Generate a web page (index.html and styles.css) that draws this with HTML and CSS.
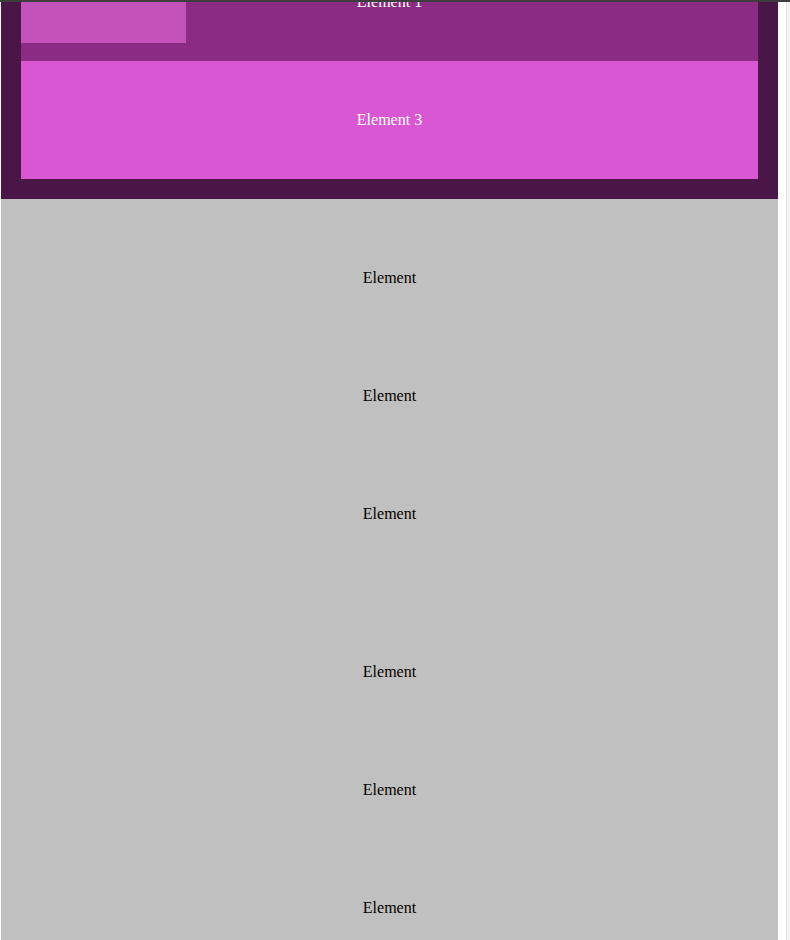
FILE: index.html
```html
<!DOCTYPE html>
<html>
<head>
<meta charset="utf-8">
<link rel="stylesheet" href="styles.css">
</head>
<body>
<div class="topline"></div>
<div class="scrolltrack"></div>
<div class="page">
  <section class="hero">
    <div class="el el1">Element 1<div class="el2"></div></div>
    <div class="el el3">Element 3</div>
  </section>
  <section class="group">
    <div class="el">Element</div>
    <div class="el">Element</div>
    <div class="el">Element</div>
  </section>
  <section class="group">
    <div class="el">Element</div>
    <div class="el">Element</div>
    <div class="el">Element</div>
  </section>
</div>
</body>
</html>
```
FILE: styles.css
```css
html, body {
  margin: 0;
  padding: 0;
  background: #ffffff;
  font-family: "Liberation Serif", "Times New Roman", serif;
  font-size: 16px;
  overflow: hidden;
}
.topline {
  position: fixed;
  top: 0;
  left: 0;
  right: 0;
  height: 2px;
  background: #3d3d3d;
  z-index: 10;
}
.scrolltrack {
  position: fixed;
  top: 0;
  bottom: 0;
  right: 0;
  width: 3px;
  background: #f3f3f3;
  border-left: 1px solid #e4e4e4;
}
.page {
  margin-left: 1px;
  width: 777px;
}
.hero {
  margin-top: -77px;
  padding: 20px;
  background: #4a1648;
  display: flex;
  flex-direction: column;
}
.el {
  height: 118px;
  display: flex;
  align-items: center;
  justify-content: center;
}
.el1 {
  position: relative;
  background: #8b2b84;
  color: #ffffff;
}
.el2 {
  position: absolute;
  top: 0;
  left: 0;
  width: 165px;
  height: 100px;
  background: #c452bb;
}
.el3 {
  background: #d957d3;
  color: #ffffff;
}
.group {
  padding: 20px;
  background: #c0c0c0;
  color: #000000;
  display: flex;
  flex-direction: column;
}
```
